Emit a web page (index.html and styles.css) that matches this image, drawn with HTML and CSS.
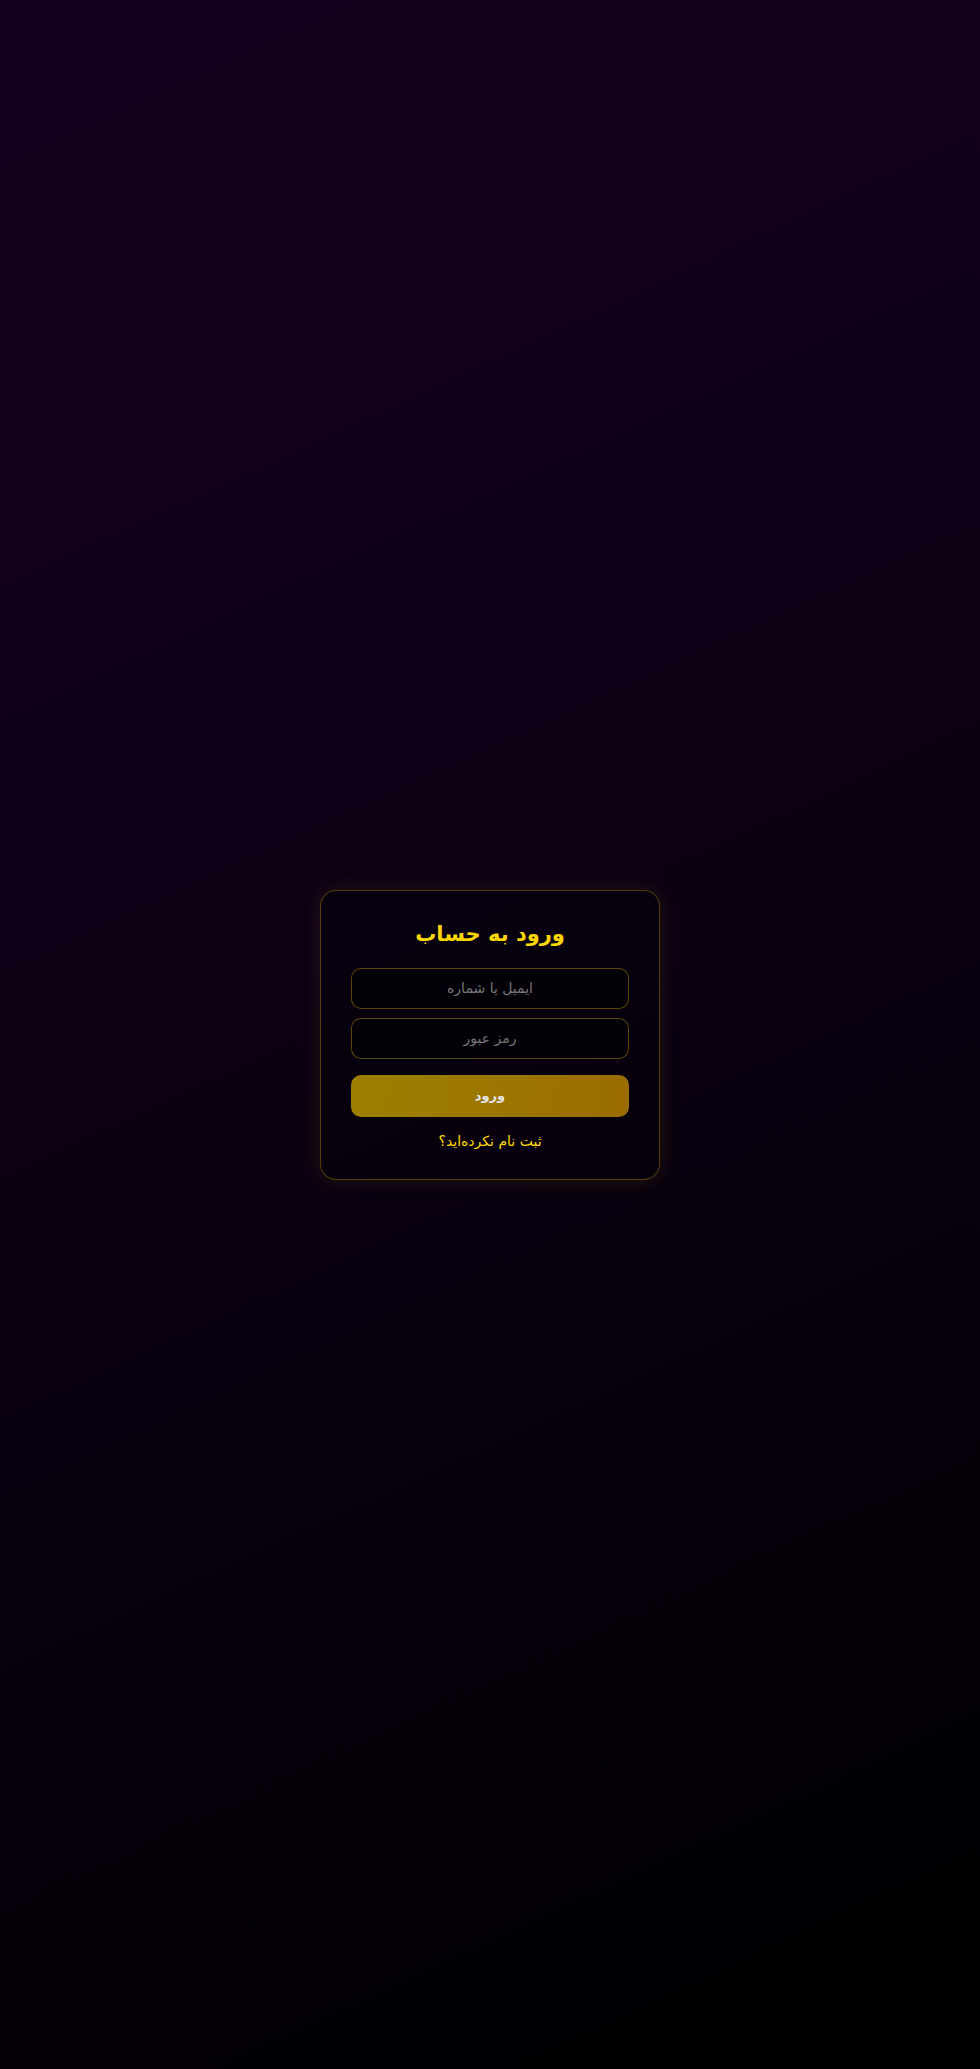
FILE: index.html
```html
<!DOCTYPE html>
<html lang="fa" dir="rtl">
<head>
<meta charset="utf-8">
<title>ورود به حساب</title>
<link rel="stylesheet" href="styles.css">
</head>
<body>
<main class="page">
  <form class="card">
    <h2 class="title">ورود به حساب</h2>
    <div class="fields">
      <input class="field" type="text" placeholder="ایمیل یا شماره">
      <input class="field" type="password" placeholder="رمز عبور">
    </div>
    <button class="submit" type="button">ورود</button>
    <a class="link" href="#">ثبت نام نکرده‌اید؟</a>
  </form>
</main>
</body>
</html>
```

FILE: styles.css
```css
* { box-sizing: border-box; }
html, body { margin: 0; padding: 0; }
body {
  font-family: "DejaVu Sans", "Noto Sans", sans-serif;
  background: linear-gradient(155deg, #14001d 0%, #0c0014 45%, #000000 100%);
  min-height: 100vh;
}
.page {
  min-height: 100vh;
  display: flex;
  align-items: center;
  justify-content: center;
}
.card {
  width: 340px;
  padding: 30px;
  border: 1px solid rgba(255, 200, 0, 0.3);
  border-radius: 16px;
  background: rgba(5, 0, 10, 0.6);
  box-shadow: 0 0 20px rgba(255, 200, 0, 0.11);
  display: flex;
  flex-direction: column;
  text-align: center;
}
.title {
  margin: 0 0 21px;
  color: #ffd700;
  font-size: 21px;
  font-weight: bold;
  line-height: 26px;
}
.fields {
  display: flex;
  flex-direction: column;
  gap: 9px;
}
.field {
  width: 100%;
  padding: 11px 14px;
  font-family: inherit;
  font-size: 14px;
  line-height: 17px;
  color: #ddd;
  text-align: center;
  background: rgba(0, 0, 0, 0.45);
  border: 1px solid rgba(255, 200, 0, 0.35);
  border-radius: 10px;
  outline: none;
}
.field::placeholder { color: #777; }
.submit {
  margin-top: 16px;
  height: 42px;
  border: none;
  border-radius: 10px;
  background: linear-gradient(100deg, #9d8000 0%, #9b6c00 100%);
  color: #e6e6e6;
  font-family: inherit;
  font-size: 13px;
  font-weight: bold;
  cursor: pointer;
}
.link {
  margin-top: 16px;
  color: #ffd700;
  font-size: 14px;
  line-height: 16px;
  text-decoration: none;
}
```
